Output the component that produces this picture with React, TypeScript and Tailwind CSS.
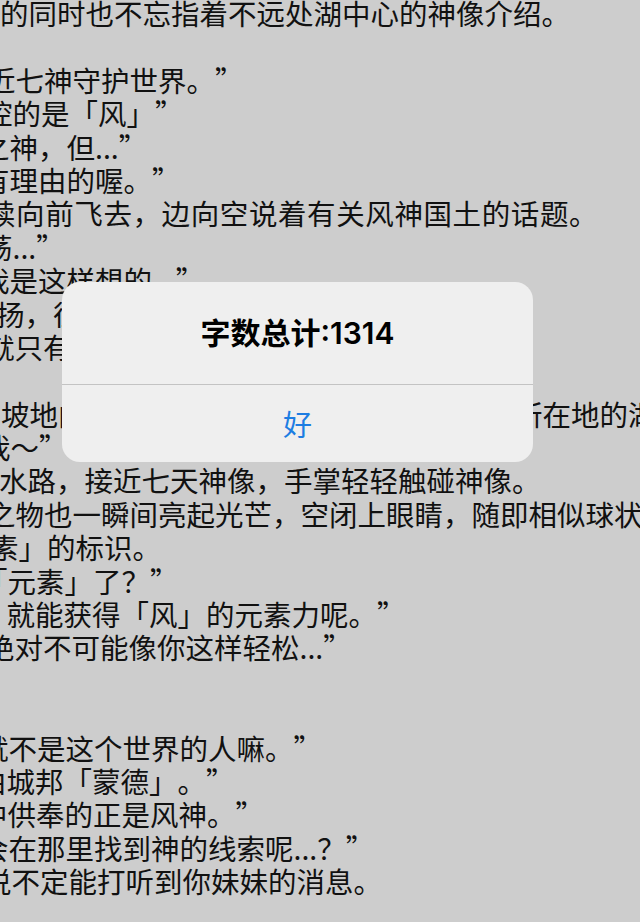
const lines: { text: string; cls: string }[] = [
  { text: "的同时也不忘指着不远处湖中心的神像介绍。", cls: "pl-[30px]" },
  { text: "", cls: "pl-[30px]" },
  { text: "近七神守护世界。”", cls: "pl-[17px]" },
  { text: "控的是「风」”", cls: "pl-[14px]" },
  { text: "之神，但...”", cls: "pl-[11px]" },
  { text: "有理由的喔。”", cls: "pl-[11px]" },
  { text: "续向前飞去，边向空说着有关风神国土的话题。", cls: "pl-[17px] tracking-[0.6px]" },
  { text: "荡...”", cls: "pl-[14px]" },
  { text: "我是这样想的...”", cls: "pl-[11px]" },
  { text: "扬，往日的风神已经不在了", cls: "pl-[26px]" },
  { text: "就只有风还在吹拂着大地", cls: "pl-[16px]" },
  { text: "", cls: "pl-[30px]" },
  { text: "坡地向下走，穿过那片草地就是七天神像所在地的湖", cls: "pl-[31px]" },
  { text: "我～”", cls: "pl-[12px]" },
  { text: "水路，接近七天神像，手掌轻轻触碰神像。", cls: "pl-[29px]" },
  { text: "之物也一瞬间亮起光芒，空闭上眼睛，随即相似球状", cls: "pl-[17px]" },
  { text: "素」的标识。", cls: "pl-[20px]" },
  { text: "「元素」了？”", cls: "pl-[9px]" },
  { text: "，就能获得「风」的元素力呢。”", cls: "pl-[8px]" },
  { text: "绝对不可能像你这样轻松...”", cls: "pl-[16px]" },
  { text: "", cls: "pl-[30px]" },
  { text: "", cls: "pl-[30px]" },
  { text: "就不是这个世界的人嘛。”", cls: "pl-[10px]" },
  { text: "由城邦「蒙德」。”", cls: "pl-[8px]" },
  { text: "中供奉的正是风神。”", cls: "pl-[9px]" },
  { text: "会在那里找到神的线索呢...？”", cls: "pl-[10px]" },
  { text: "说不定能打听到你妹妹的消息。", cls: "pl-[13px]" },
];

function AlertDialog() {
  return (
    <div className="absolute left-[62px] top-[282px] w-[471px] h-[180px] rounded-[18px] bg-[#efefef] flex flex-col overflow-hidden">
      <div className="h-[103px] flex items-center justify-center border-b border-[#c3c3c3]">
        <span className="text-[30px] font-semibold text-black font-['Inter','Noto_Sans_CJK_SC',sans-serif] leading-none">
          字数总计:1314
        </span>
      </div>
      <div className="flex-1 flex items-center justify-center">
        <span className="text-[29px] text-[#1d7de2] font-['Noto_Sans_CJK_SC',sans-serif] leading-none">
          好
        </span>
      </div>
    </div>
  );
}

export default function App() {
  return (
    <div className="relative w-[640px] h-[922px] bg-[#cdcdcd] overflow-hidden">
      <div className="flex flex-col ml-[-30px] mt-[-4px] font-['Noto_Sans_CJK_SC',sans-serif] text-[28.5px] leading-[33.4px] text-[#111111] [text-spacing-trim:space-all]">
        {lines.map((line, i) => (
          <div key={i} className={`whitespace-nowrap h-[33.4px] ${line.cls}`}>
            {line.text}
          </div>
        ))}
      </div>
      <AlertDialog />
    </div>
  );
}
